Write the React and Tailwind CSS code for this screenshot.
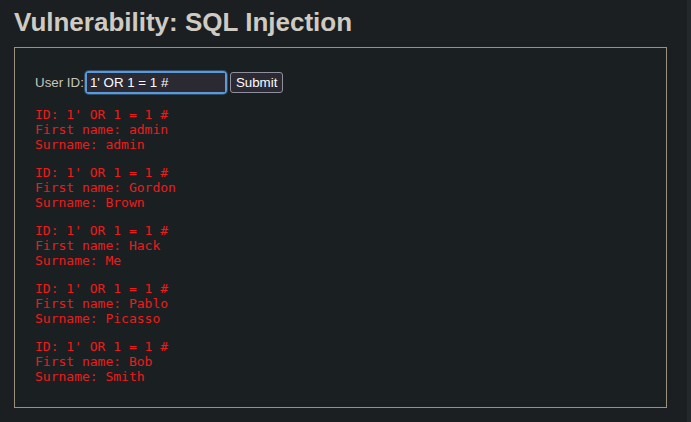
const rows = [
  { first: 'admin', last: 'admin' },
  { first: 'Gordon', last: 'Brown' },
  { first: 'Hack', last: 'Me' },
  { first: 'Pablo', last: 'Picasso' },
  { first: 'Bob', last: 'Smith' },
];

export default function App() {
  return (
    <div className="relative h-[422px] w-full overflow-hidden bg-[#1b1f21]" style={{ fontFamily: '"Liberation Sans", Arial, sans-serif' }}>
      <div className="absolute right-0 top-0 h-full w-[4px] bg-[#23282a]" />
      <h1 className="pl-[14px] pt-[7px] text-[26px] font-bold leading-[30px] text-[#cfcbc3]">
        Vulnerability: SQL Injection
      </h1>
      <div className="ml-[14px] mt-[10px] h-[361px] w-[653px] border border-[#9b917d] bg-[#1a2022] pl-[20px] pt-[23px]">
        <div className="flex h-[23px] items-center">
          <span className="text-[13.33px] text-[#c8c4bc]">User ID:</span>
          <div className="ml-[1px] rounded-[4px] border-2 border-[#5b9ad6] p-0 shadow-[0_0_0_1px_#2f4b66]">
            <div className="flex h-[19px] w-[138px] items-center bg-[#2b2a33] pl-[3px] text-[13.33px] text-[#fbfbfe]">
              1' OR 1 = 1 #
            </div>
          </div>
          <button className="ml-[3px] flex h-[21px] items-center rounded-[3px] border border-[#8f8f9d] bg-[#2b2a33] px-[5px] text-[13.33px] text-[#fbfbfe]">
            Submit
          </button>
        </div>
        <div className="mt-[13px] flex flex-col gap-[13px] text-[13px] leading-[15px] text-[#ec1c1c]" style={{ fontFamily: '"DejaVu Sans Mono", monospace' }}>
          {rows.map((r) => (
            <pre key={r.first} className="m-0" style={{ fontFamily: 'inherit' }}>
              {`ID: 1' OR 1 = 1 #\nFirst name: ${r.first}\nSurname: ${r.last}`}
            </pre>
          ))}
        </div>
      </div>
    </div>
  );
}
